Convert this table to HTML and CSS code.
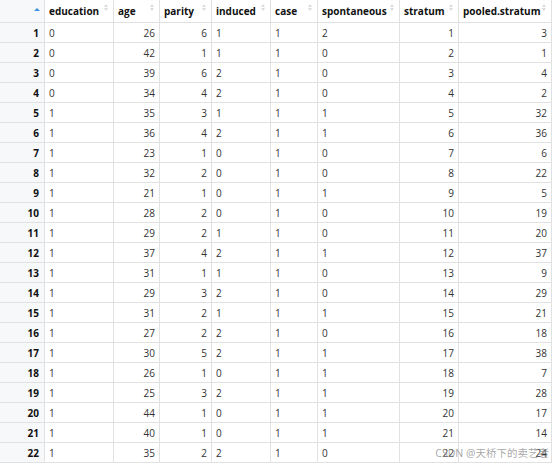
FILE: index.html
```html
<!DOCTYPE html>
<html>
<head>
<meta charset="utf-8">
<link rel="stylesheet" href="styles.css">
</head>
<body>
<div class="viewer">
<table class="grid">
<thead>
<tr>
<th class="idx w-idx"><span class="sort-active"></span></th>
<th class="w-edu">education<span class="sort"></span></th>
<th class="w-age">age<span class="sort"></span></th>
<th class="w-par">parity<span class="sort"></span></th>
<th class="w-ind">induced<span class="sort"></span></th>
<th class="w-case">case<span class="sort"></span></th>
<th class="w-spo">spontaneous<span class="sort"></span></th>
<th class="w-str">stratum<span class="sort"></span></th>
<th class="w-pool">pooled.stratum<span class="sort"></span></th>
</tr>
</thead>
<tbody id="rows"></tbody>
</table>
<div class="watermark">CSDN @天桥下的卖艺者</div>
</div>
<script src="app.js"></script>
</body>
</html>
```
FILE: app.js
```js
const data = [
[0,26,6,1,1,2,1,3],[0,42,1,1,1,0,2,1],[0,39,6,2,1,0,3,4],[0,34,4,2,1,0,4,2],
[1,35,3,1,1,1,5,32],[1,36,4,2,1,1,6,36],[1,23,1,0,1,0,7,6],[1,32,2,0,1,0,8,22],
[1,21,1,0,1,1,9,5],[1,28,2,0,1,0,10,19],[1,29,2,1,1,0,11,20],[1,37,4,2,1,1,12,37],
[1,31,1,1,1,0,13,9],[1,29,3,2,1,0,14,29],[1,31,2,1,1,1,15,21],[1,27,2,2,1,0,16,18],
[1,30,5,2,1,1,17,38],[1,26,1,0,1,1,18,7],[1,25,3,2,1,1,19,28],[1,44,1,0,1,1,20,17],
[1,40,1,0,1,1,21,14],[1,35,2,2,1,0,22,24]
];
const numeric = [false,true,true,false,false,false,true,true];
const tbody = document.getElementById('rows');
data.forEach((r,i)=>{
  const tr = document.createElement('tr');
  const th = document.createElement('td');
  th.className = 'idx';
  th.textContent = i+1;
  tr.appendChild(th);
  r.forEach((v,j)=>{
    const td = document.createElement('td');
    td.className = numeric[j] ? 'num' : 'fac';
    td.textContent = v;
    tr.appendChild(td);
  });
  tbody.appendChild(tr);
});
```
FILE: styles.css
```css
html, body {
  margin: 0;
  padding: 0;
  background: #fff;
}
.viewer {
  position: relative;
  width: 554px;
  height: 465px;
  overflow: hidden;
  font-family: "Open Sans", "Noto Sans", sans-serif;
  font-size: 10px;
  color: #333;
}
.grid {
  border-collapse: separate;
  border-spacing: 0;
  table-layout: fixed;
  width: 552px;
}
.grid th, .grid td {
  box-sizing: border-box;
  border-right: 1px solid #e1e1e1;
  border-bottom: 1px solid #e1e1e1;
  padding: 0 4px;
  white-space: nowrap;
  overflow: hidden;
}
.grid th {
  position: relative;
  height: 23px;
  text-align: left;
  font-weight: 700;
  color: #111;
  background: #fff;
}
.grid td {
  height: 20px;
}
.grid .idx {
  background: #f6f8fa;
  text-align: right;
  font-weight: 700;
  color: #111;
  padding-right: 5px;
}
.grid td.num {
  text-align: right;
  padding-right: 4px;
}
.w-idx { width: 45px; }
.w-edu { width: 69px; }
.w-age { width: 46px; }
.w-par { width: 52px; }
.w-ind { width: 59px; }
.w-case { width: 47px; }
.w-spo { width: 82px; }
.w-str { width: 59px; }
.w-pool { width: 93px; }
.sort {
  position: absolute;
  right: 4px;
  top: 4px;
  width: 5px;
  height: 7px;
}
.sort::before, .sort::after {
  content: "";
  position: absolute;
  left: 0;
  border-left: 2.5px solid transparent;
  border-right: 2.5px solid transparent;
}
.sort::before {
  top: 0;
  border-bottom: 3px solid #dcdcdc;
}
.sort::after {
  bottom: 0;
  border-top: 3px solid #dcdcdc;
}
.sort-active {
  position: absolute;
  right: 4px;
  top: 8px;
  width: 0;
  height: 0;
  border-left: 3px solid transparent;
  border-right: 3px solid transparent;
  border-bottom: 3px solid #3d8fe0;
}
.watermark {
  position: absolute;
  right: 5px;
  bottom: 5px;
  font-family: "Noto Sans", "Noto Sans CJK SC", sans-serif;
  font-size: 10.5px;
  color: rgba(140,140,140,0.75);
  white-space: nowrap;
}
```
